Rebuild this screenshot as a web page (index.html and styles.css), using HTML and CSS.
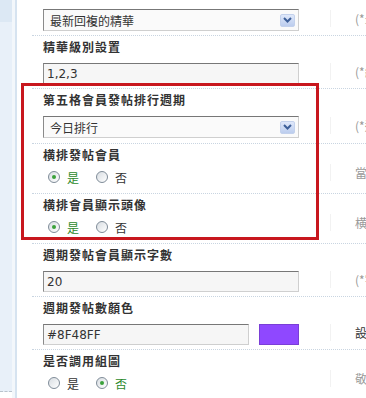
FILE: index.html
```html
<!doctype html>
<html>
    <head>
        <meta charset="utf-8">
        <title>精華設置</title>
        <link rel="stylesheet" href="styles.css">
    </head>
    <body>
        <div class="side">
            <div class="side-top"></div>
            <div class="side-fill"></div>
        </div>
        <div class="main">
            <div class="row first">
                <div class="cell">
                    <div class="select">
                        <span>最新回複的精華</span>
                        <span class="arrow"><svg width="9" height="6" viewBox="0 0 9 6"><path d="M1 1 L4.5 4.5 L8 1" fill="none" stroke="#3d5f99" stroke-width="2"/></svg></span>
                    </div>
                </div>
                <div class="desc">(*最新</div>
            </div>
            <div class="row">
                <div class="cell">
                    <div class="label">精華級別設置</div>
                    <input class="text" type="text" value="1,2,3">
                </div>
                <div class="desc">(*級別</div>
            </div>
            <div class="row tall">
                <div class="cell">
                    <div class="label">第五格會員發帖排行週期</div>
                    <div class="select">
                        <span>今日排行</span>
                        <span class="arrow"><svg width="9" height="6" viewBox="0 0 9 6"><path d="M1 1 L4.5 4.5 L8 1" fill="none" stroke="#3d5f99" stroke-width="2"/></svg></span>
                    </div>
                </div>
                <div class="desc">(*週期</div>
            </div>
            <div class="row radios">
                <div class="cell">
                    <div class="label">横排發帖會員</div>
                    <div class="choice">
                        <label class="on"><span class="dot checked"></span>是</label>
                        <label><span class="dot"></span>否</label>
                    </div>
                </div>
                <div class="desc">當前</div>
            </div>
            <div class="row radios">
                <div class="cell">
                    <div class="label">横排會員顯示頭像</div>
                    <div class="choice">
                        <label class="on"><span class="dot checked"></span>是</label>
                        <label><span class="dot"></span>否</label>
                    </div>
                </div>
                <div class="desc">横排</div>
            </div>
            <div class="row">
                <div class="cell">
                    <div class="label">週期發帖會員顯示字數</div>
                    <input class="text" type="text" value="20">
                </div>
                <div class="desc">(*字數</div>
            </div>
            <div class="row">
                <div class="cell">
                    <div class="label">週期發帖數顏色</div>
                    <div class="color-line">
                        <input class="text short" type="text" value="#8F48FF">
                        <span class="swatch" style="background-color: #8F48FF;"></span>
                    </div>
                </div>
                <div class="desc dark">設置</div>
            </div>
            <div class="row radios">
                <div class="cell">
                    <div class="label">是否調用組圖</div>
                    <div class="choice">
                        <label><span class="dot"></span>是</label>
                        <label class="on"><span class="dot checked"></span>否</label>
                    </div>
                </div>
                <div class="desc">敬請</div>
            </div>
            <div class="highlight"></div>
        </div>
    </body>
</html>
```

FILE: styles.css
```css
body {
    margin: 0;
    display: flex;
    min-height: 100vh;
    font-family: "DejaVu Sans", "Noto Sans CJK TC", sans-serif;
    font-size: 12px;
    color: #333;
    background-color: #fff;
    overflow: hidden;
}
.side {
    width: 12px;
    flex: none;
    display: flex;
    flex-direction: column;
    border-right: 3px solid #f3f7fb;
    box-shadow: 2px 0 0 #d6e3f0;
    margin-right: 2px;
}
.side-top {
    height: 22px;
    background-color: #dce8f4;
}
.side-fill {
    height: 369px;
    background-color: #e8f0f9;
    border-bottom: 1px dashed #b9c3cc;
}
.main {
    position: relative;
    flex: 1;
    padding-left: 15px;
}
.row {
    display: grid;
    grid-template-columns: 298px 1fr;
    border-bottom: 1px dotted #c9d5e1;
    padding: 3px 0 4px 0;
}
.row.first {
    padding-top: 9px;
}
.row.tall {
    padding-bottom: 5px;
}
.row.radios {
    padding-bottom: 6px;
}
.cell {
    padding-left: 11px;
}
.label {
    font-family: "Noto Sans CJK TC", sans-serif;
    font-weight: bold;
    letter-spacing: 1px;
    line-height: 16px;
    height: 16px;
    margin-bottom: 8px;
    color: #333;
}
.radios .label {
    margin-bottom: 4px;
}
.desc {
    align-self: end;
    border-left: 1px solid #f2f2f2;
    padding-left: 24px;
    margin-bottom: 4px;
    color: #999;
    font-family: "Noto Sans CJK TC", sans-serif;
    white-space: nowrap;
    overflow: hidden;
}
.radios .desc {
    margin-bottom: 6px;
}
.desc.dark {
    color: #333;
}
.text, .select {
    box-sizing: border-box;
    width: 256px;
    height: 21px;
    margin: 0;
    padding: 0 3px;
    border: 1px solid #cfcfcf;
    border-top-color: #777;
    border-left-color: #8a8a8a;
    background-color: #f6f6f6;
    font-family: "DejaVu Sans", "Noto Sans CJK TC", sans-serif;
    font-size: 12px;
    color: #333;
    display: block;
    outline: none;
}
.select {
    height: 22px;
    display: flex;
    align-items: center;
    justify-content: space-between;
    padding: 0 3px 0 6px;
    font-family: "Noto Sans CJK TC", sans-serif;
    background-color: #fafafa;
}
.arrow {
    width: 15px;
    height: 13px;
    display: flex;
    align-items: center;
    justify-content: center;
    background: linear-gradient(#dfe8fa, #bccdee);
    border: 1px solid #c3d1ec;
    border-radius: 2px;
    box-sizing: border-box;
}
.color-line {
    display: flex;
    align-items: center;
}
.text.short {
    width: 206px;
}
.swatch {
    width: 40px;
    height: 21px;
    margin-left: 10px;
    box-sizing: border-box;
    border: 1px solid #7a3fd6;
}
.choice {
    display: flex;
    align-items: center;
    height: 20px;
    padding-left: 5px;
    font-family: "Noto Sans CJK TC", sans-serif;
}
.choice label {
    display: flex;
    align-items: center;
    margin-right: 17px;
}
.choice label.on {
    color: #2c8a2c;
}
.dot {
    box-sizing: border-box;
    width: 12px;
    height: 12px;
    border-radius: 50%;
    border: 1px solid #7f8c98;
    background: linear-gradient(135deg, #d8dde2, #ffffff);
    margin-right: 7px;
    position: relative;
}
.dot.checked::after {
    content: "";
    position: absolute;
    left: 3px;
    top: 3px;
    width: 4px;
    height: 4px;
    border-radius: 50%;
    background-color: #3aa13a;
}
.highlight {
    position: absolute;
    left: 4px;
    top: 83px;
    width: 298px;
    height: 157px;
    box-sizing: border-box;
    border: 3px solid #c8171e;
    pointer-events: none;
}
```
